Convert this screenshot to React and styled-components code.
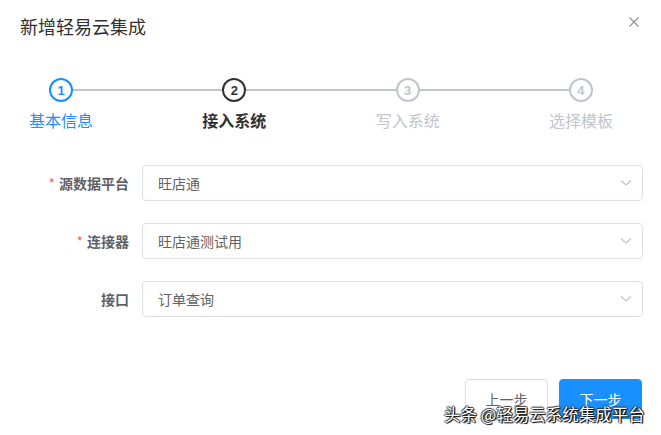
import React from "react";
import styled, { createGlobalStyle } from "styled-components";

const GlobalStyle = createGlobalStyle`
  html, body {
    margin: 0;
    padding: 0;
    background: #ffffff;
    overflow: hidden;
  }
  body {
    font-family: "Noto Sans CJK SC", "Noto Sans", "Liberation Sans", sans-serif;
  }
`;

const Dialog = styled.div`
  position: relative;
  width: 661px;
  height: 435px;
  background: #fff;
  display: flex;
  flex-direction: column;
`;

const Header = styled.div`
  display: flex;
  justify-content: space-between;
  align-items: center;
  padding: 14px 21px 0 20px;
  height: 24px;
`;

const Title = styled.span`
  font-size: 18px;
  line-height: 24px;
  color: #303133;
`;

const Close = styled.button`
  width: 12px;
  height: 12px;
  padding: 0;
  border: none;
  background: transparent;
  display: flex;
  cursor: pointer;
  margin-top: -8px;
`;

const Steps = styled.div`
  margin: 40px 0 0 29px;
  width: 584px;
  display: flex;
  flex-direction: column;
`;

const HeadRow = styled.div`
  display: flex;
  align-items: center;
  padding: 0 20px;
`;

const Circle = styled.div`
  width: 24px;
  height: 24px;
  box-sizing: border-box;
  border-radius: 50%;
  border: 2px solid ${(p) => p.$color};
  color: ${(p) => p.$color};
  display: flex;
  align-items: center;
  justify-content: center;
  font-family: "Liberation Sans", Arial, sans-serif;
  font-weight: bold;
  font-size: 13px;
  flex-shrink: 0;
`;

const Line = styled.div`
  flex: 1;
  height: 2px;
  background: #c0c4cc;
`;

const LabelRow = styled.div`
  display: flex;
  justify-content: space-between;
  margin-top: 7px;
`;

const StepLabel = styled.span`
  width: 64px;
  text-align: center;
  font-size: 16px;
  line-height: 22px;
  color: ${(p) => p.$color};
  font-weight: ${(p) => (p.$active ? 700 : 400)};
`;

const Form = styled.div`
  margin-top: 34px;
  padding: 0 18px 0 20px;
  display: flex;
  flex-direction: column;
  gap: 22px;
`;

const Row = styled.div`
  display: flex;
  align-items: center;
  height: 36px;
`;

const Label = styled.label`
  width: 122px;
  box-sizing: border-box;
  padding-right: 13px;
  text-align: right;
  font-size: 14px;
  font-weight: 700;
  color: #606266;
`;

const Star = styled.span`
  color: #f56c6c;
  margin-right: 4px;
  font-weight: 400;
`;

const Select = styled.div`
  flex: 1;
  height: 36px;
  box-sizing: border-box;
  border: 1px solid #dcdfe6;
  border-radius: 4px;
  display: flex;
  align-items: center;
  justify-content: space-between;
  padding: 0 10px 0 15px;
  font-size: 14px;
  color: #606266;
`;

const Footer = styled.div`
  margin-top: 62px;
  display: flex;
  justify-content: flex-end;
  gap: 11px;
  padding-right: 19px;
`;

const Button = styled.button`
  width: 83px;
  height: 40px;
  box-sizing: border-box;
  border-radius: 4px;
  font-family: inherit;
  font-size: 14px;
  border: 1px solid ${(p) => (p.$primary ? "#1890ff" : "#dcdfe6")};
  background: ${(p) => (p.$primary ? "#1890ff" : "#ffffff")};
  color: ${(p) => (p.$primary ? "#ffffff" : "#606266")};
  cursor: pointer;
`;

const Watermark = styled.div`
  position: absolute;
  left: 444px;
  top: 403px;
  font-size: 16.5px;
  line-height: 22px;
  color: #ffffff;
  white-space: nowrap;
  text-shadow: 1px 1px 1px #000, -1px 0 1px #333, 0 -1px 1px #333, 1px 0 1px #333;
`;

const Chevron = () => (
  <svg width="12" height="8" viewBox="0 0 12 8">
    <path d="M1 1.5 L6 6 L11 1.5" fill="none" stroke="#c0c4cc" strokeWidth="1.2" />
  </svg>
);

const steps = [
  { n: 1, label: "基本信息", color: "#1890ff" },
  { n: 2, label: "接入系统", color: "#303133", active: true },
  { n: 3, label: "写入系统", color: "#c0c4cc" },
  { n: 4, label: "选择模板", color: "#c0c4cc" },
];

const fields = [
  { label: "源数据平台", value: "旺店通", required: true },
  { label: "连接器", value: "旺店通测试用", required: true },
  { label: "接口", value: "订单查询" },
];

export default function App() {
  return (
    <>
      <GlobalStyle />
      <Dialog>
        <Header>
          <Title>新增轻易云集成</Title>
          <Close aria-label="close">
            <svg width="12" height="12" viewBox="0 0 12 12">
              <path d="M1.5 1.5 L10.5 10.5 M10.5 1.5 L1.5 10.5" stroke="#909399" strokeWidth="1.2" />
            </svg>
          </Close>
        </Header>

        <Steps>
          <HeadRow>
            {steps.map((s, i) => (
              <React.Fragment key={s.n}>
                <Circle $color={s.color}>{s.n}</Circle>
                {i < steps.length - 1 && <Line />}
              </React.Fragment>
            ))}
          </HeadRow>
          <LabelRow>
            {steps.map((s) => (
              <StepLabel key={s.n} $color={s.color} $active={s.active}>
                {s.label}
              </StepLabel>
            ))}
          </LabelRow>
        </Steps>

        <Form>
          {fields.map((f) => (
            <Row key={f.label}>
              <Label>
                {f.required && <Star>*</Star>}
                {f.label}
              </Label>
              <Select>
                <span>{f.value}</span>
                <Chevron />
              </Select>
            </Row>
          ))}
        </Form>

        <Footer>
          <Button>上一步</Button>
          <Button $primary>下一步</Button>
        </Footer>

        <Watermark>头条 @轻易云系统集成平台</Watermark>
      </Dialog>
    </>
  );
}
